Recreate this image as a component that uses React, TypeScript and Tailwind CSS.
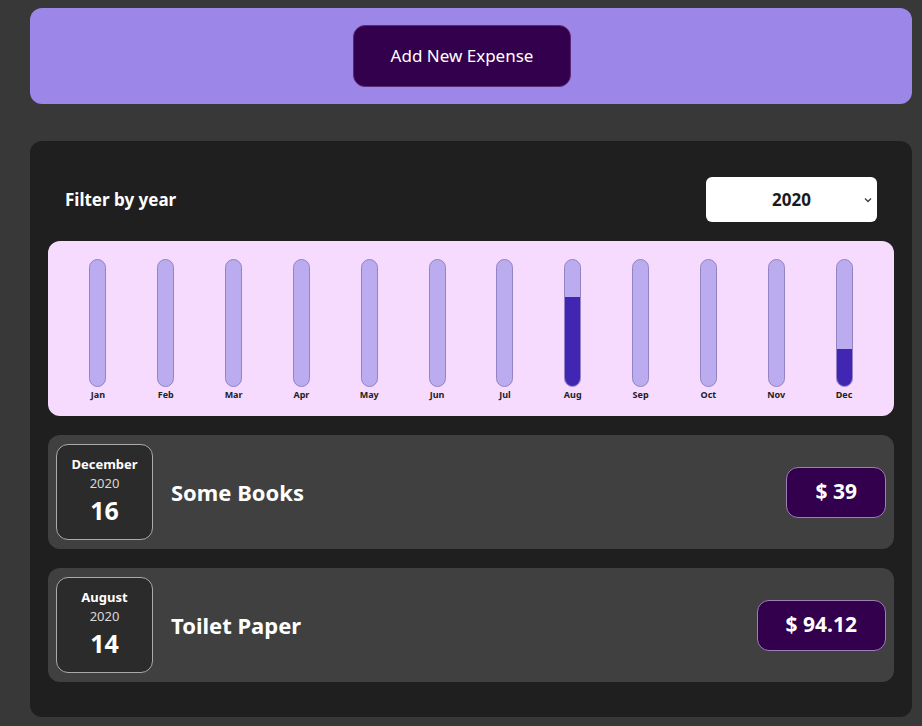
import React from "react";

const months = ["Jan", "Feb", "Mar", "Apr", "May", "Jun", "Jul", "Aug", "Sep", "Oct", "Nov", "Dec"];

const expenses = [
  { id: 1, month: "December", year: "2020", day: "16", title: "Some Books", amount: 39 },
  { id: 2, month: "August", year: "2020", day: "14", title: "Toilet Paper", amount: 94.12 },
];

const values = [0, 0, 0, 0, 0, 0, 0, 94.12, 0, 0, 0, 39];
const total = values.reduce((a, b) => a + b, 0);

const ChartBar = ({ label, value }: { label: string; value: number }) => {
  const fill = total > 0 ? Math.round((value / total) * 100) + "%" : "0%";
  return (
    <div className="flex flex-col items-center">
      <div className="flex h-[128px] w-[17px] flex-col justify-end overflow-hidden rounded-xl border border-[#9483c4] bg-[#baacef]">
        <div className="w-full bg-[#4026b2]" style={{ height: fill }}></div>
      </div>
      <div className="mt-[1px] text-[9px] font-bold text-[#222]">{label}</div>
    </div>
  );
};

const ExpenseDate = ({ month, year, day }: { month: string; year: string; day: string }) => {
  return (
    <div className="flex h-[96px] w-[97px] flex-col items-center justify-center rounded-xl border border-[#aaaaaa] bg-[#2b2b2b] pb-[2px] text-white">
      <div className="text-[13px] font-bold leading-[18px]">{month}</div>
      <div className="text-[13px] leading-[20px] text-[#d8d8d8]">{year}</div>
      <div className="text-[25px] font-bold leading-[34px]">{day}</div>
    </div>
  );
};

export default function App() {
  return (
    <div className="min-h-[726px] bg-[#383838] pt-[8px] pr-[10px] pb-[10px] pl-[30px] font-['Noto_Sans',sans-serif]">
      <div className="flex h-[96px] items-center justify-center rounded-xl bg-[#9c87e9]">
        <button className="mr-[18px] h-[62px] w-[218px] rounded-xl border border-[#5a2a78] bg-[#33004d] text-[17px] text-white">
          Add New Expense
        </button>
      </div>

      <div className="mt-[37px] rounded-xl bg-[#1f1f1f] px-[18px] pt-[36px] pb-[35px]">
        <div className="flex items-center justify-between pr-[17px] pl-[17px]">
          <div className="text-[17px] font-bold text-white">Filter by year</div>
          <div className="relative flex h-[45px] w-[171px] items-center justify-center rounded-md bg-white">
            <span className="text-[17px] font-bold text-[#1a1a1a]">2020</span>
            <svg
              className="absolute right-[4px] h-[10px] w-[10px]"
              viewBox="0 0 10 10"
              fill="none"
              stroke="#444"
              strokeWidth="1.4"
            >
              <path d="M2 3.5 L5 6.5 L8 3.5" />
            </svg>
          </div>
        </div>

        <div className="mt-[19px] grid h-[175px] grid-cols-12 rounded-xl bg-[#f6dbff] px-4 pt-[18px]">
          {months.map((m, i) => (
            <ChartBar key={m} label={m} value={values[i]} />
          ))}
        </div>

        <ul className="mt-[19px] flex flex-col gap-[19px]">
          {expenses.map((e) => (
            <li key={e.id} className="flex h-[114px] items-center rounded-xl bg-[#404040] p-2">
              <ExpenseDate month={e.month} year={e.year} day={e.day} />
              <h2 className="ml-[18px] flex-1 text-[22px] font-bold text-white">{e.title}</h2>
              <div className="flex h-[51px] items-center rounded-xl border border-[#9d7fb5] bg-[#33004d] px-[28px] text-[21px] font-bold text-white">
                $ {e.amount}
              </div>
            </li>
          ))}
        </ul>
      </div>
    </div>
  );
}
